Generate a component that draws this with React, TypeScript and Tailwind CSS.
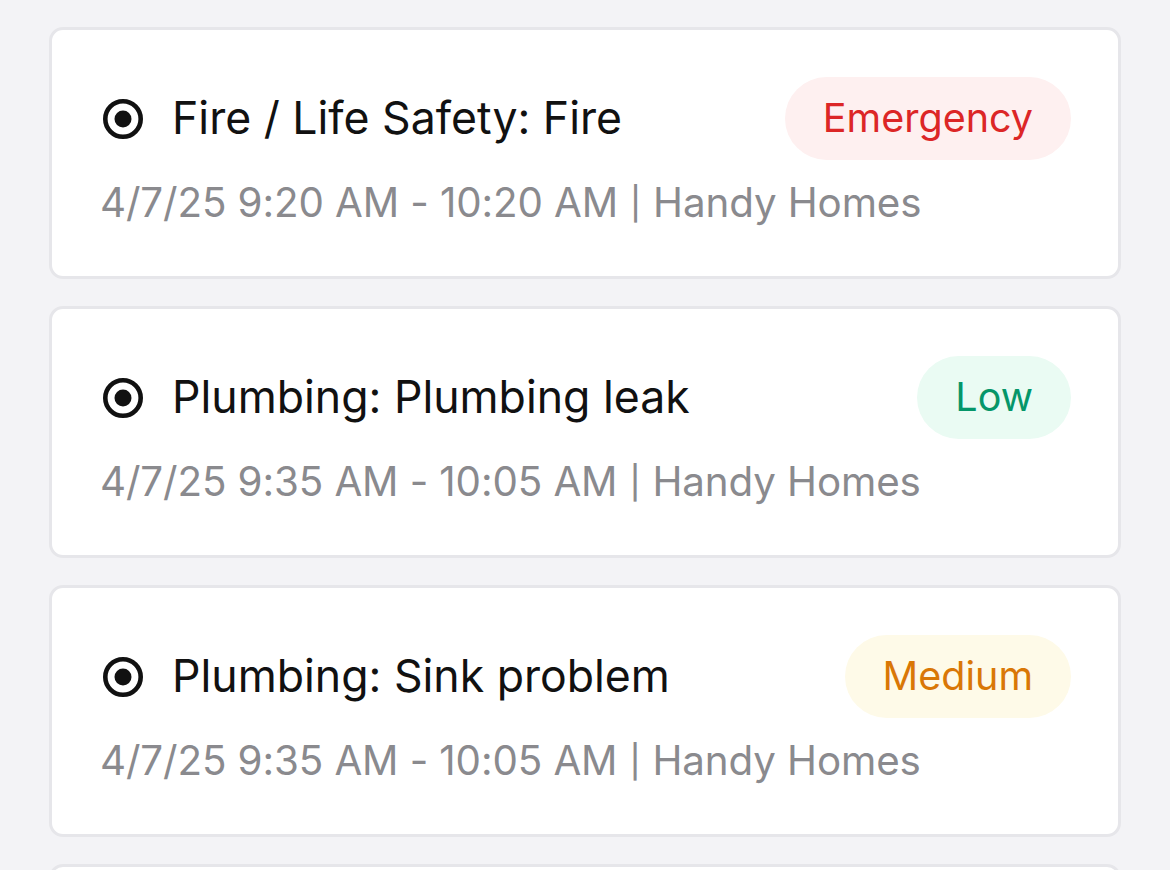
import React from "react";

type Item = { title: string; sub: string; badge: string; tone: "red" | "green" | "amber" };

const items: Item[] = [
  { title: "Fire / Life Safety: Fire", sub: "4/7/25 9:20 AM - 10:20 AM", badge: "Emergency", tone: "red" },
  { title: "Plumbing: Plumbing leak", sub: "4/7/25 9:35 AM - 10:05 AM", badge: "Low", tone: "green" },
  { title: "Plumbing: Sink problem", sub: "4/7/25 9:35 AM - 10:05 AM", badge: "Medium", tone: "amber" },
];

function Badge({ tone, children }: { tone: Item["tone"]; children: React.ReactNode }) {
  const cls =
    tone === "red"
      ? "bg-[#fef0f0] text-[#dc2626]"
      : tone === "green"
      ? "bg-[#eafbf3] text-[#059669]"
      : "bg-[#fefae8] text-[#d97706]";
  return (
    <span className={`inline-flex h-[83px] items-center rounded-full px-[38px] text-[39.5px] leading-none ${cls}`}>
      {children}
    </span>
  );
}

function RadioIcon() {
  return (
    <svg width="40" height="40" viewBox="0 0 40 40" className="shrink-0">
      <circle cx="20" cy="20" r="17.7" fill="none" stroke="#111" strokeWidth="4.6" />
      <circle cx="20" cy="20" r="8.5" fill="#111" />
    </svg>
  );
}

function Card({ item }: { item?: Item }) {
  return (
    <div className="h-[252px] rounded-[14px] border-[3px] border-[#e6e6ea] bg-white pl-[51px] pr-[47px] pt-[47px]">
      {item && (
        <>
          <div className="flex items-center justify-between">
            <div className="flex items-center gap-[29px]">
              <RadioIcon />
              <span className="text-[44.6px] leading-none text-[#111111]">{item.title}</span>
            </div>
            <Badge tone={item.tone}>{item.badge}</Badge>
          </div>
          <div className="-ml-[3px] mt-[19px] text-[40.3px] leading-[48px] tracking-[-0.1px] text-[#8a8a8e]">
            {item.sub} <span className="inline-block scale-y-[0.85] text-[38px]">|</span> Handy Homes
          </div>
        </>
      )}
    </div>
  );
}

export default function App() {
  return (
    <div
      className="h-[870px] w-[1170px] overflow-hidden bg-[#f3f3f6]"
      style={{ fontFamily: "Inter, 'Noto Sans', sans-serif" }}
    >
      <div className="-mt-[252px] flex flex-col gap-[27px] px-[49px]">
        <Card />
        {items.map((it) => (
          <Card key={it.title + it.badge} item={it} />
        ))}
        <Card />
      </div>
    </div>
  );
}
